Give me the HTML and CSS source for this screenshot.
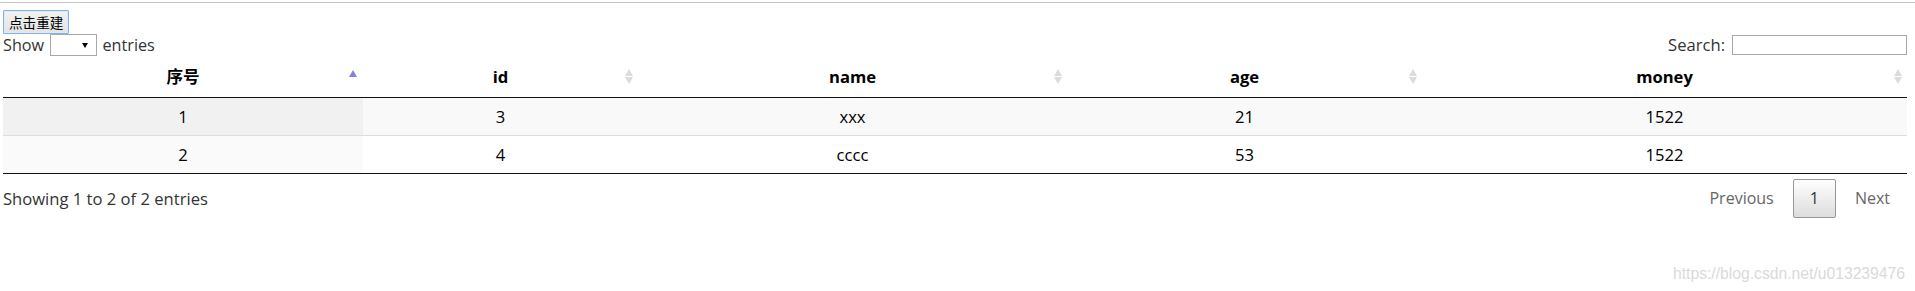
FILE: index.html
```html
<!DOCTYPE html>
<html lang="zh-CN">
<head>
<meta charset="utf-8">
<title>DataTables</title>
<link rel="stylesheet" href="styles.css">
</head>
<body>
<div class="topline"></div>
<div class="page">
  <button class="rebuild" type="button">点击重建</button>
  <div class="wrapper">
    <div class="controls">
      <label class="length">Show <span class="select"><span class="caret"></span></span> entries</label>
      <label class="filter">Search:<span class="search"></span></label>
    </div>
    <table class="datatable">
      <colgroup>
        <col class="c1"><col class="c2"><col class="c3"><col class="c4"><col class="c5">
      </colgroup>
      <thead>
        <tr>
          <th class="sort-asc">序号</th>
          <th class="sort-both">id</th>
          <th class="sort-both">name</th>
          <th class="sort-both">age</th>
          <th class="sort-both">money</th>
        </tr>
      </thead>
      <tbody>
        <tr class="odd"><td class="sorted">1</td><td>3</td><td>xxx</td><td>21</td><td>1522</td></tr>
        <tr class="even"><td class="sorted">2</td><td>4</td><td>cccc</td><td>53</td><td>1522</td></tr>
      </tbody>
    </table>
    <div class="footer">
      <div class="info">Showing 1 to 2 of 2 entries</div>
      <div class="paginate">
        <span class="pbtn disabled">Previous</span>
        <span class="pbtn current">1</span>
        <span class="pbtn disabled">Next</span>
      </div>
    </div>
  </div>
</div>
<div class="watermark">https://blog.csdn.net/u013239476</div>
</body>
</html>
```
FILE: styles.css
```css
html, body {
  margin: 0;
  padding: 0;
  background: #fff;
}
body {
  font-family: "Open Sans", "Noto Sans CJK SC", sans-serif;
  font-size: 16.6px;
  line-height: 22px;
  color: #333;
  position: relative;
  height: 291px;
  overflow: hidden;
}
.topline {
  margin-top: 2px;
  height: 1px;
  background: #c4c4c4;
}
.page {
  padding: 7px 8px 0 3px;
}
.rebuild {
  display: block;
  height: 24px;
  padding: 0 5px;
  margin: 0;
  font-family: "Noto Sans CJK SC", sans-serif;
  font-size: 13.6px;
  line-height: 20px;
  color: #000;
  background: linear-gradient(#f2f2f2, #e3e3e3);
  border: 1px solid #7eb4ea;
  box-shadow: inset 0 0 0 1px #dbeaf8;
  border-radius: 1px;
}
.controls {
  display: flex;
  justify-content: space-between;
  align-items: flex-end;
  height: 22px;
}
.length, .filter {
  display: flex;
  align-items: center;
  white-space: pre;
}
.length {
  font-size: 16.2px;
}
.select {
  display: inline-block;
  position: relative;
  width: 45px;
  height: 20px;
  border: 1px solid #a9a9a9;
  background: #fff;
  margin: 0 1px 0 2px;
}
.caret {
  position: absolute;
  right: 8px;
  top: 8px;
  width: 0;
  height: 0;
  border-left: 3px solid transparent;
  border-right: 3px solid transparent;
  border-top: 5px solid #000;
}
.search {
  display: inline-block;
  width: 173px;
  height: 18px;
  border: 1px solid #a9a9a9;
  margin-left: 7px;
  background: #fff;
}
.datatable {
  width: 100%;
  border-collapse: separate;
  border-spacing: 0;
  table-layout: fixed;
  color: #000;
}
.c1 { width: 360px; }
.c2 { width: 275px; }
.c3 { width: 429px; }
.c4 { width: 355px; }
.c5 { width: auto; }
.datatable th {
  position: relative;
  font-weight: bold;
  padding: 10px 10px;
  height: 21px;
  line-height: 21px;
  border-bottom: 1px solid #111;
  text-align: center;
}
.datatable td {
  padding: 8px 10px;
  height: 21px;
  line-height: 21px;
  text-align: center;
  border-top: 1px solid #ddd;
}
.datatable tbody tr:first-child td {
  border-top: none;
}
.datatable tbody tr:last-child td {
  border-bottom: 1px solid #111;
}
.odd td { background: #f9f9f9; }
.even td { background: #fff; }
.odd td.sorted { background: #f1f1f1; }
.even td.sorted { background: #fafafa; }

.sort-asc::after {
  content: "";
  position: absolute;
  right: 6px;
  top: 14px;
  width: 0;
  height: 0;
  border-left: 4px solid transparent;
  border-right: 4px solid transparent;
  border-bottom: 7px solid #7f82e0;
}
.sort-both::before,
.sort-both::after {
  content: "";
  position: absolute;
  right: 5px;
  width: 0;
  height: 0;
  border-left: 4px solid transparent;
  border-right: 4px solid transparent;
}
.sort-both::before {
  top: 13px;
  border-bottom: 7px solid #dcdcdc;
}
.sort-both::after {
  top: 21px;
  border-top: 7px solid #dcdcdc;
}
.footer {
  display: flex;
  justify-content: space-between;
  align-items: flex-start;
}
.info {
  padding-top: 14px;
}
.paginate {
  display: flex;
  padding-top: 5px;
  font-size: 16px;
}
.pbtn {
  display: inline-block;
  padding: 8px 16px;
  margin-left: 2px;
  border: 1px solid transparent;
  border-radius: 2px;
  line-height: 21px;
  color: #666;
}
.pbtn.current {
  color: #333;
  border-color: #979797;
  background: linear-gradient(#fff, #dcdcdc);
}
.watermark {
  position: absolute;
  right: 10px;
  top: 264px;
  font-family: "Liberation Sans", Arial, sans-serif;
  font-size: 15.7px;
  line-height: 20px;
  color: #dadada;
}
```
